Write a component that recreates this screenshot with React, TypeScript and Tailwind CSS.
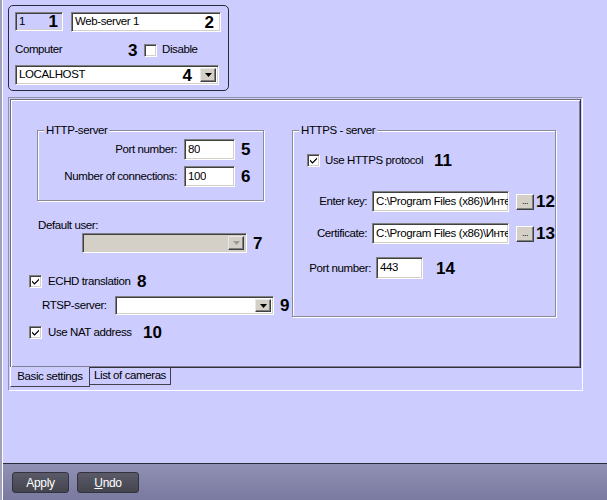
import React from "react";

const FONT = { fontFamily: "'Liberation Sans', Arial, sans-serif" };

// sunken 3D edge used by edits and combos
const sunken =
  "border border-t-[#808080] border-l-[#808080] border-r-white border-b-white shadow-[inset_1px_1px_0_#404040,inset_-1px_-1px_0_#d4d0c8]";
const txt = "text-[11.5px] tracking-[-0.4px] whitespace-nowrap";

function Num({ children, className = "" }: { children: React.ReactNode; className?: string }) {
  return <span className={`text-[17px] font-bold leading-none tracking-normal text-black ${className}`}>{children}</span>;
}

function Arrow({ disabled = false }: { disabled?: boolean }) {
  return (
    <div className="flex h-full w-[16px] items-center justify-center border border-t-[#e8e8e8] border-l-[#e8e8e8] border-r-[#404040] border-b-[#404040] bg-[#d4d0c8] shadow-[inset_-1px_-1px_0_#808080]">
      <svg width="7" height="4" viewBox="0 0 7 4">
        <path d="M0 0h7L3.5 4z" fill={disabled ? "#9a9a9a" : "#000"} />
      </svg>
    </div>
  );
}

function Check({ checked = false }: { checked?: boolean }) {
  return (
    <div className={`flex h-[13px] w-[13px] shrink-0 items-center justify-center bg-white ${sunken}`}>
      {checked && (
        <svg width="7" height="7" viewBox="0 0 7 7">
          <path d="M0 2.5l2.5 2.5L7 0.5v1.8L2.5 6.8 0 4.3z" fill="#000" />
        </svg>
      )}
    </div>
  );
}

function Edit({ value, className = "" }: { value: string; className?: string }) {
  return (
    <div className={`flex shrink-0 items-center overflow-hidden bg-white pl-[3px] ${txt} ${sunken} ${className}`}>
      <span className="overflow-hidden">{value}</span>
    </div>
  );
}

function Dots() {
  return (
    <button className="ml-[7px] flex h-[16px] w-[18px] shrink-0 items-end justify-center border border-t-white border-l-white border-r-[#404040] border-b-[#404040] bg-[#d4d0c8] pb-[3px] text-[9px] leading-none shadow-[inset_-1px_-1px_0_#808080]">
      ...
    </button>
  );
}

function Group({ title, className = "", children }: { title: string; className?: string; children: React.ReactNode }) {
  return (
    <div className={`relative border border-[#8a8a9a] shadow-[1px_1px_0_#fff,inset_1px_1px_0_#fff] ${className}`}>
      <span className={`absolute -top-[8px] left-[6px] bg-[#ccccff] px-[2px] leading-[14px] ${txt}`}>{title}</span>
      {children}
    </div>
  );
}

export default function App() {
  return (
    <div style={FONT} className="flex h-[500px] w-[607px] border-l-2 border-[#a0a0b8] text-black">
      <div className="flex flex-1 flex-col border-l border-white bg-[#ccccff]">
        {/* main area */}
        <div className="flex flex-1 flex-col">
          {/* id / name / computer */}
          <div className="ml-[5px] mt-[5px] h-[86px] w-[221px] rounded-[5px] border border-[#2a2a3a] pl-[6px] pt-[6px]">
            <div className="flex">
              <div className={`flex h-[19px] w-[48px] items-center justify-between bg-[#ccccff] pl-[3px] pr-[4px] ${txt} ${sunken}`}>
                <span>1</span>
                <Num>1</Num>
              </div>
              <div className={`ml-[8px] flex h-[20px] w-[150px] items-center justify-between bg-white pl-[3px] pr-[6px] ${txt} ${sunken}`}>
                <span>Web-server 1</span>
                <Num>2</Num>
              </div>
            </div>
            <div className={`mt-[11px] flex h-[14px] items-center ${txt}`}>
              <span className="w-[113px]">Computer</span>
              <Num className="w-[10px]">3</Num>
              <div className="ml-[6px]">
                <Check />
              </div>
              <span className="ml-[5px]">Disable</span>
            </div>
            <div className={`mt-[8px] flex h-[20px] w-[204px] items-center bg-white p-[2px] pl-[3px] ${txt} ${sunken}`}>
              <span className="flex-1">LOCALHOST</span>
              <Num className="mr-[8px]">4</Num>
              <Arrow />
            </div>
          </div>

          {/* tab control */}
          <div className="ml-[5px] mt-[6px] flex h-[294px] w-[575px] flex-col border border-t-[#9090a8] border-l-[#9090a8] border-r-white border-b-white">
            <div className="ml-[1px] mt-[1px] flex h-[269px] w-[571px] shrink-0 border border-t-[#70707a] border-l-[#70707a] border-r-[#303040] border-b-[#303040] shadow-[inset_1px_1px_0_#fff,inset_-1px_-1px_0_#808090]">
              {/* left column */}
              <div className="flex w-[281px] shrink-0 flex-col pl-[18px]">
                <Group title="HTTP-server" className="ml-[8px] mt-[30px] h-[71px] w-[227px] pt-[8px]">
                  <div className={`flex h-[21px] items-center ${txt}`}>
                    <span className="w-[139px] text-right">Port number:</span>
                    <Edit value="80" className="ml-[7px] h-[21px] w-[51px]" />
                    <Num className="ml-[6px]">5</Num>
                  </div>
                  <div className={`mt-[6px] flex h-[21px] items-center ${txt}`}>
                    <span className="w-[139px] text-right">Number of connections:</span>
                    <Edit value="100" className="ml-[7px] h-[21px] w-[51px]" />
                    <Num className="ml-[6px]">6</Num>
                  </div>
                </Group>
                <span className={`ml-[9px] mt-[17px] leading-[14px] ${txt}`}>Default user:</span>
                <div className="mt-[1px] flex items-center">
                  <div className={`ml-[53px] flex h-[20px] w-[165px] justify-end bg-[#d4d0c8] p-[2px] ${sunken}`}>
                    <Arrow disabled />
                  </div>
                  <Num className="ml-[6px]">7</Num>
                </div>
                <div className={`mt-[20px] flex items-center ${txt}`}>
                  <Check checked />
                  <span className="ml-[6px] w-[89px]">ECHD translation</span>
                  <Num>8</Num>
                </div>
                <div className={`mt-[6px] flex items-center ${txt}`}>
                  <span className="ml-[13px] w-[73px]">RTSP-server:</span>
                  <div className={`flex h-[19px] w-[159px] justify-end bg-white p-[2px] ${sunken}`}>
                    <Arrow />
                  </div>
                  <Num className="ml-[6px]">9</Num>
                </div>
                <div className={`mt-[9px] flex items-center ${txt}`}>
                  <Check checked />
                  <span className="ml-[6px] w-[95px]">Use NAT address</span>
                  <Num>10</Num>
                </div>
              </div>

              {/* right column */}
              <Group title="HTTPS - server" className="mt-[30px] h-[187px] w-[264px] pl-[14px]">
                <div className={`mt-[21px] flex items-center ${txt}`}>
                  <Check checked />
                  <span className="ml-[5px] w-[109px]">Use HTTPS protocol</span>
                  <Num>11</Num>
                </div>
                <div className={`mt-[22px] flex items-center ${txt}`}>
                  <span className="-ml-[14px] w-[78px] text-right">Enter key:</span>
                  <Edit value="C:\Program Files (x86)\Интеллект\" className="ml-[5px] h-[21px] w-[137px]" />
                  <Dots />
                  <Num className="ml-[2px]">12</Num>
                </div>
                <div className={`mt-[11px] flex items-center ${txt}`}>
                  <span className="-ml-[14px] w-[78px] text-right">Certificate:</span>
                  <Edit value="C:\Program Files (x86)\Интеллект\" className="ml-[5px] h-[21px] w-[137px]" />
                  <Dots />
                  <Num className="ml-[2px]">13</Num>
                </div>
                <div className={`mt-[13px] flex items-center ${txt}`}>
                  <span className="-ml-[14px] w-[78px] text-right">Port number:</span>
                  <Edit value="443" className="ml-[5px] h-[22px] w-[47px] items-start pt-[1px]" />
                  <Num className="ml-[13px]">14</Num>
                </div>
              </Group>
            </div>

            {/* tabs */}
            <div className={`ml-[1px] flex ${txt}`}>
              <div className="-mt-[1px] flex h-[20px] w-[80px] items-center justify-center border border-t-0 border-l-white border-r-[#404050] border-b-[#404050] bg-[#ccccff]">
                Basic settings
              </div>
              <div className="flex h-[17px] w-[81px] items-center justify-center border border-t-0 border-l-0 border-r-[#404050] border-b-[#404050]">
                List of cameras
              </div>
            </div>
          </div>
        </div>

        {/* bottom bar */}
        <div className="flex h-[37px] shrink-0 gap-[8px] border-t border-[#2a2a3a] bg-gradient-to-b from-[#9090b4] to-[#7a7aa0] pl-[9px] pt-[8px]">
          <button className="h-[21px] w-[57px] rounded-[3px] border border-[#33333f] bg-gradient-to-b from-[#5a5a68] to-[#45454f] text-[12px] tracking-[-0.3px] text-white">
            Apply
          </button>
          <button className="h-[21px] w-[62px] rounded-[3px] border border-[#33333f] bg-gradient-to-b from-[#5a5a68] to-[#45454f] text-[12px] tracking-[-0.3px] text-white">
            <span className="underline">U</span>ndo
          </button>
        </div>
      </div>
    </div>
  );
}
